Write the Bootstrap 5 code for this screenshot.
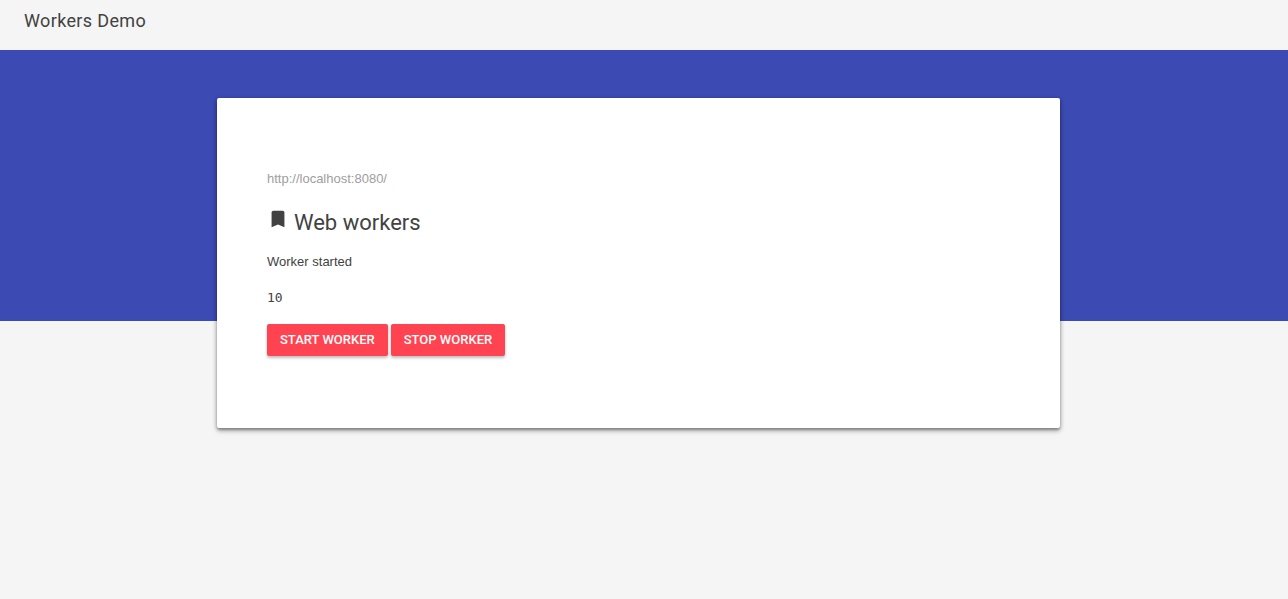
<!DOCTYPE html>
<html lang="en">
<head>
<meta charset="utf-8">
<meta name="viewport" content="width=device-width, initial-scale=1">
<title>Workers Demo</title>
<link href="https://cdn.jsdelivr.net/npm/bootstrap@5.3.0/dist/css/bootstrap.min.css" rel="stylesheet">
<style>
body { background: #f5f5f5; color: #424242; font: 13px/24px "Liberation Sans", Arial, sans-serif; }
.site-header { height: 50px; padding: 9px 24px; }
.site-title { font: 400 18px/24px Roboto, sans-serif; letter-spacing: .02em; }
.ribbon { background: #3c4ab3; height: 271px; }
.main-area { margin-top: -223px; padding: 0 16px 48px; }
.panel { background: #fff; border-radius: 2px; padding: 69px 50px 72px; box-shadow: 0 2px 2px rgba(0,0,0,.2), 0 3px 5px rgba(0,0,0,.25), 0 1px 5px rgba(0,0,0,.2); }
.crumb { color: #9e9e9e; }
.topic { font: 400 22px/32px Roboto, sans-serif; gap: 5px; margin: 16px 0 11px; }
.count { font: 13px/24px "DejaVu Sans Mono", monospace; margin: 12px 0 14px; }
.actions { gap: 3px; }
.action { background: #ff4351; color: #fff; border: 0; border-radius: 2px; height: 32px; padding: 0 13px; font: 500 13px/32px Roboto, sans-serif; text-transform: uppercase; box-shadow: 0 2px 3px rgba(0,0,0,.25); }
@media (min-width: 992px) {
  .main-area { padding-left: 217px; padding-right: 228px; }
}
</style>
</head>
<body>
<div class="min-vh-100 d-flex flex-column">
<header class="site-header"><h1 class="site-title m-0">Workers Demo</h1></header>
<div class="ribbon flex-shrink-0"></div>
<main class="main-area">
<section class="panel">
<a class="crumb d-block text-decoration-none" href="http://localhost:8080/">http://localhost:8080/</a>
<h2 class="topic d-flex"><svg class="flex-shrink-0" width="22" height="24" viewBox="0 0 24 24" fill="#424242" aria-hidden="true"><path d="M17 3H7c-1.100 0-2 .9-2 2v16l7-3 7 3V5c0-1.100-.9-2-2-2z"/></svg><span>Web workers</span></h2>
<p class="m-0">Worker started</p>
<output class="count d-block">10</output>
<div class="actions d-flex flex-wrap"><button type="button" class="action">Start worker</button><button type="button" class="action">Stop worker</button></div>
</section>
</main>
</div>
<script src="https://cdn.jsdelivr.net/npm/bootstrap@5.3.0/dist/js/bootstrap.bundle.min.js"></script>
</body>
</html>
